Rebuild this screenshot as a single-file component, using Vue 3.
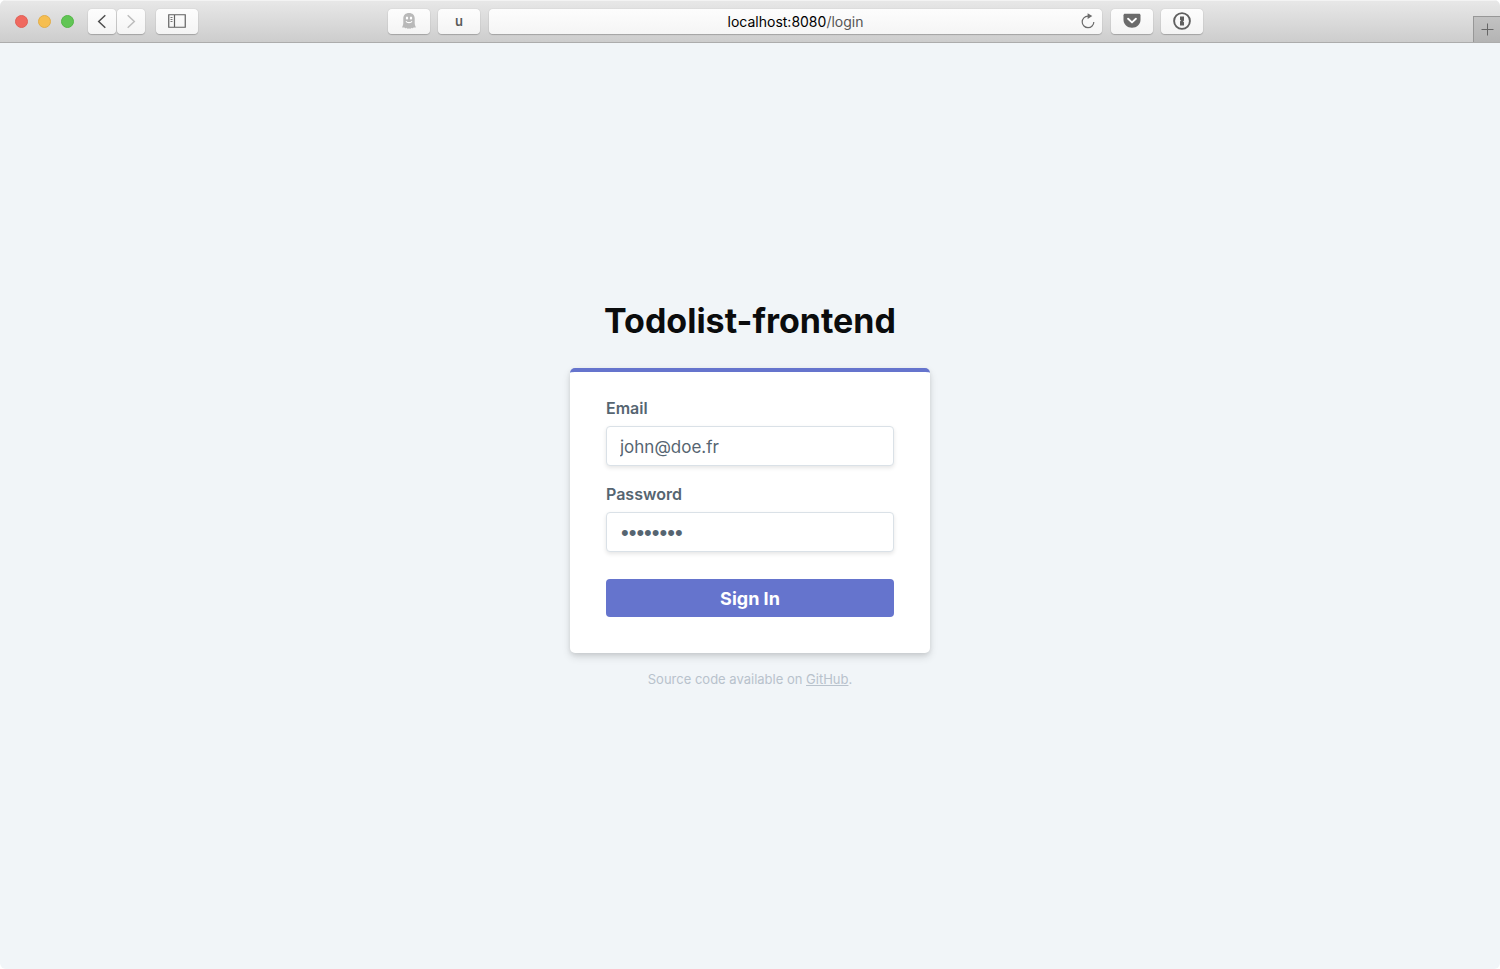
<script setup>
import { ref } from 'vue'

const email = ref('john@doe.fr')
const password = ref('password')
</script>

<template>
  <div class="window">
    <header class="toolbar">
      <div class="lights">
        <button class="light red" type="button" aria-label="Close"></button>
        <button class="light yellow" type="button" aria-label="Minimize"></button>
        <button class="light green" type="button" aria-label="Zoom"></button>
      </div>
      <div class="nav">
        <button class="tool back" type="button" aria-label="Back">
          <svg width="28" height="25" viewBox="0 0 28 25" fill="none" stroke="#4f4f4f" stroke-width="1.5"><path d="M17.3 6.3 10.7 12.5l6.6 6.2" /></svg>
        </button>
        <button class="tool forward" type="button" aria-label="Forward">
          <svg width="28" height="25" viewBox="0 0 28 25" fill="none" stroke="#bdbdbd" stroke-width="1.5"><path d="M10.7 6.3 17.3 12.5l-6.6 6.2" /></svg>
        </button>
      </div>
      <button class="tool" type="button" aria-label="Sidebar">
        <svg width="18" height="14" viewBox="0 0 18 14" fill="none" stroke="#606060"><path d="M.75.75h16.5v12.5H.75zM6.5.75v12.5" stroke-width="1.2" /><path d="M2.5 3.5h2M2.5 5.5h2M2.5 7.5h2" stroke="#777" /></svg>
      </button>
      <span class="space-left"></span>
      <div class="center">
        <button class="tool" type="button" aria-label="Ghostery">
          <svg width="14" height="16" viewBox="0 0 14 16"><path d="M7 0C3.500 0 1.300 2.200 1.300 5.400V9.500C1.300 11.500.9 12.800 0 14.200c.8.500 1.500.5 2.200 0 .5 1.200 1.500 1.500 2.400.6.600 1.300 1.800 1.400 2.400.2.600 1.200 1.800 1.100 2.400-.2.900.9 1.900.6 2.400-.6.700.5 1.400.5 2.200 0-.9-1.400-1.300-2.700-1.300-4.700V5.400C12.700 2.200 10.500 0 7 0z" fill="#b9b9b9" /><ellipse cx="5" cy="5" rx="1.200" ry="1.600" fill="#fff" /><ellipse cx="9" cy="5" rx="1.200" ry="1.600" fill="#fff" /><path d="M4 8.200c1.100 2 4.900 2 6 0" fill="none" stroke="#fff" stroke-width="1.200" /></svg>
        </button>
        <button class="tool letter" type="button">u</button>
        <div class="address">
          <span class="url">localhost:8080<span class="path">/login</span></span>
          <button class="reload" type="button" aria-label="Reload">
            <svg width="14" height="16" viewBox="0 0 14 16"><path d="M7.600 3.100H6.900a5.800 5.800 0 1 0 5.900 5.800" fill="none" stroke="#6b6b6b" stroke-width="1.200" /><path d="M6.600.3v5.600l4.700-2.800z" fill="#6b6b6b" /></svg>
          </button>
        </div>
        <button class="tool" type="button" aria-label="Pocket">
          <svg width="18" height="16" viewBox="0 0 18 16"><path d="M2 .8h14c.9 0 1.500.6 1.500 1.500v4.500c0 4.700-3.800 8-8.500 8S.5 11.500.5 6.800V2.300C.5 1.400 1.100.8 2 .8z" fill="#6b6b6b" /><path d="m5.100 5.700 3.900 3.700 3.900-3.700" fill="none" stroke="#fff" stroke-width="1.900" stroke-linecap="round" stroke-linejoin="round" /></svg>
        </button>
        <button class="tool" type="button" aria-label="1Password">
          <svg width="18" height="18" viewBox="0 0 18 18"><circle cx="9" cy="9" r="7.900" fill="none" stroke="#5f5f5f" stroke-width="1.900" /><path d="M7 4.600h4v3.900l-1 .9 1 .9v3.100H7V9.500l1-.9-1-.9z" fill="#5f5f5f" /></svg>
        </button>
      </div>
      <span class="space-right"></span>
      <button class="new-tab" type="button" aria-label="New tab">
        <svg width="13" height="13" viewBox="0 0 13 13" stroke="#666" stroke-width="1"><path d="M6.500.5v12M.5 6.500h12" /></svg>
      </button>
    </header>

    <main class="page">
      <h1 class="title">Todolist-frontend</h1>
      <form class="card" @submit.prevent>
        <div class="field">
          <label for="email">Email</label>
          <input id="email" v-model="email" type="email" />
        </div>
        <div class="field">
          <label for="password">Password</label>
          <input id="password" v-model="password" type="password" autocomplete="off" />
        </div>
        <button class="submit" type="submit">Sign In</button>
      </form>
      <p class="source">Source code available on <a href="#">GitHub</a>.</p>
    </main>
  </div>
</template>

<style>
body {
  background: #fff;
}
</style>

<style scoped>
.window {
  display: flex;
  flex-direction: column;
  min-height: 100vh;
  overflow: hidden;
  border-radius: 6px;
  background: #f1f5f8;
  font-family: Inter, "Liberation Sans", sans-serif;
}

.window *,
.window {
  box-sizing: border-box;
}

button {
  margin: 0;
  padding: 0;
  border: 0;
  font-family: inherit;
}

.toolbar {
  display: flex;
  align-items: center;
  height: 43px;
  padding-left: 15px;
  border-bottom: 1px solid #acacac;
  background: linear-gradient(#e8e8e8, #cdcdcd);
  box-shadow: inset 0 1px #f3f3f3;
}

.lights {
  display: flex;
  gap: 10px;
  margin-right: 14px;
}

.light {
  width: 13px;
  height: 13px;
  border-radius: 50%;
}

.red {
  border: 1px solid #df6157;
  background: #f0695f;
}

.yellow {
  border: 1px solid #e2ad48;
  background: #f6be50;
}

.green {
  border: 1px solid #53b746;
  background: #61c555;
}

.nav {
  display: flex;
  gap: 1px;
  margin-right: 11px;
}

.tool {
  display: flex;
  flex: none;
  align-items: center;
  justify-content: center;
  width: 42px;
  height: 25px;
  border-radius: 4px;
  background: linear-gradient(#fdfdfd, #f4f4f4);
  box-shadow: 0 0 1px rgba(0, 0, 0, 0.25), 0 1px 1px rgba(0, 0, 0, 0.2);
}

.back,
.forward {
  width: 28px;
}

.space-left {
  flex: 190;
}

.space-right {
  flex: 270;
}

.center {
  display: flex;
  flex: 815;
  gap: 8px;
}

.letter {
  color: #5b5b5b;
  font-size: 13px;
  font-weight: 600;
  line-height: 24px;
}

.address {
  display: flex;
  flex: 1;
  align-items: center;
  height: 25px;
  margin: 0 1px;
  padding: 0 7px;
  border-radius: 4px;
  background: linear-gradient(#fdfdfd, #f5f5f5);
  box-shadow: 0 0 1px rgba(0, 0, 0, 0.25), 0 1px 1px rgba(0, 0, 0, 0.2);
}

.url {
  flex: 1;
  padding-top: 1px;
  padding-left: 14px;
  color: #000;
  font-size: 14px;
  line-height: 24px;
  text-align: center;
}

.path {
  color: #555;
}

.reload {
  display: flex;
  background: none;
}

.new-tab {
  display: flex;
  align-items: center;
  justify-content: center;
  align-self: flex-end;
  width: 27px;
  height: 26px;
  border-top: 1px solid #979797;
  border-left: 1px solid #979797;
  background: linear-gradient(#c2c2c2, #b4b4b4);
}

.page {
  display: flex;
  flex: 1;
  flex-direction: column;
  align-items: center;
  justify-content: center;
  padding-bottom: 24px;
}

.title {
  margin: 0 0 25px;
  color: #0b0c0d;
  font-size: 34px;
  font-weight: 700;
  line-height: 44px;
}

.card {
  width: 360px;
  max-width: 100%;
  padding: 26px 36px 36px;
  border-top: 4px solid #6574cd;
  border-radius: 5px;
  background: #fff;
  box-shadow: 0 4px 8px rgba(0, 0, 0, 0.12), 0 2px 4px rgba(0, 0, 0, 0.08);
}

.field {
  display: flex;
  flex-direction: column;
  gap: 8px;
  margin-bottom: 18px;
}

label {
  color: #566571;
  font-size: 16px;
  font-weight: 600;
  line-height: 20px;
}

input {
  width: 100%;
  height: 40px;
  margin: 0;
  padding: 2px 13px 0;
  border: 1px solid #dae1e7;
  border-radius: 4px;
  outline: 0;
  background: #fff;
  box-shadow: 0 2px 4px rgba(0, 0, 0, 0.1);
  color: #566571;
  font-family: inherit;
  font-size: 17px;
}

input[type="password"] {
  padding-left: 14px;
  font-family: "Liberation Sans", sans-serif;
  font-size: 22px;
}

.submit {
  width: 100%;
  height: 38px;
  margin-top: 9px;
  border-radius: 4px;
  background: #6574cd;
  color: #fff;
  font-size: 18px;
  font-weight: 700;
}

.source {
  margin: 16px 0 0;
  color: #b8c2cc;
  font-size: 13px;
  line-height: 20px;
}

.source a {
  color: inherit;
  text-decoration: underline;
}
</style>
